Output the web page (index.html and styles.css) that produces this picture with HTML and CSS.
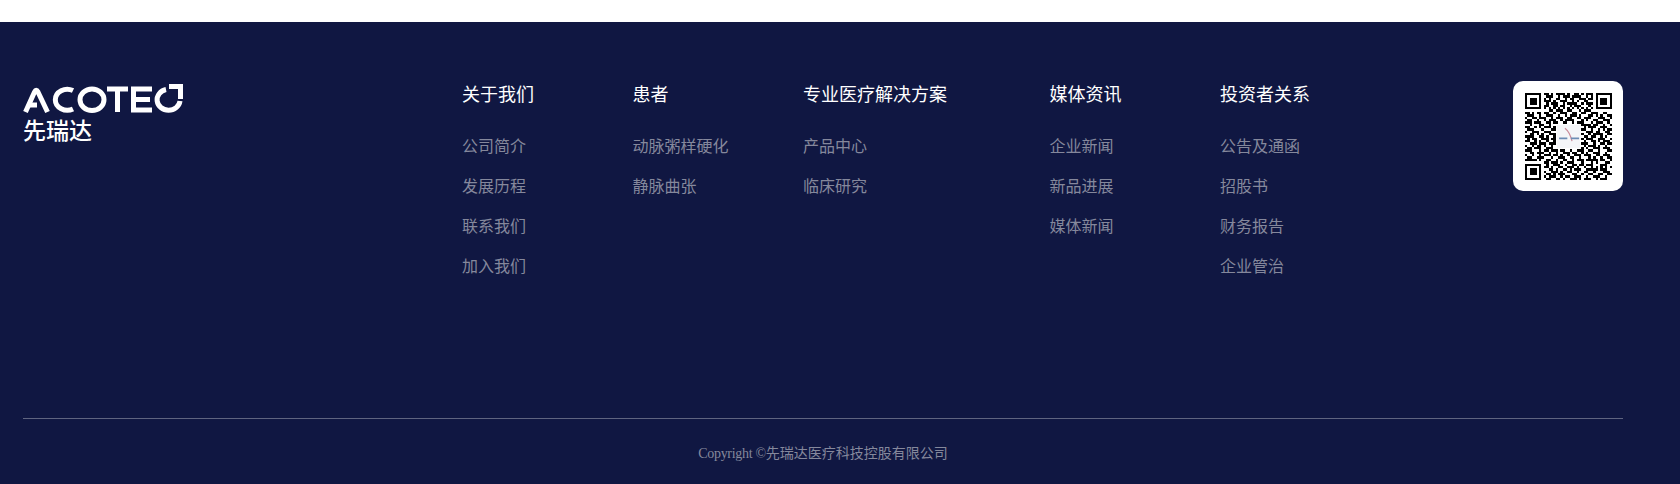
FILE: index.html
```html
<!DOCTYPE html>
<html lang="zh-CN">
<head>
<meta charset="utf-8">
<title>先瑞达</title>
<link rel="stylesheet" href="styles.css">
</head>
<body>
<footer class="footer">
  <div class="top">
    <div class="brand">
      <svg class="logo" viewBox="0 0 162 30" width="162" height="30" fill="none" stroke="#fff" stroke-width="5" aria-label="ACOTEC">
        <path d="M2.500 28 L11.500 8 Q13.200 4.500 15 8 L24.500 28"/>
        <path d="M7 21 H14"/>
        <path d="M50 6.500 A12 10.500 0 1 0 50 25"/>
        <ellipse cx="69" cy="15.800" rx="12" ry="10.800"/>
        <path d="M84 5 H105 M94.500 5 V28"/>
        <path d="M129 5 H110.500 V26 H129 M110.500 15.500 H127"/>
        <path d="M143 5.500 A11.500 10.500 0 1 0 157 17"/>
        <path d="M146 2.500 H157.500 V15"/>
      </svg>
      <div class="brand-cn">先瑞达</div>
    </div>
    <nav class="cols">
      <div class="col">
        <h4 class="col-title">关于我们</h4>
        <a class="col-link">公司简介</a>
        <a class="col-link">发展历程</a>
        <a class="col-link">联系我们</a>
        <a class="col-link">加入我们</a>
      </div>
      <div class="col">
        <h4 class="col-title">患者</h4>
        <a class="col-link">动脉粥样硬化</a>
        <a class="col-link">静脉曲张</a>
      </div>
      <div class="col col-wide">
        <h4 class="col-title">专业医疗解决方案</h4>
        <a class="col-link">产品中心</a>
        <a class="col-link">临床研究</a>
      </div>
      <div class="col">
        <h4 class="col-title">媒体资讯</h4>
        <a class="col-link">企业新闻</a>
        <a class="col-link">新品进展</a>
        <a class="col-link">媒体新闻</a>
      </div>
      <div class="col">
        <h4 class="col-title">投资者关系</h4>
        <a class="col-link">公告及通函</a>
        <a class="col-link">招股书</a>
        <a class="col-link">财务报告</a>
        <a class="col-link">企业管治</a>
      </div>
    </nav>
    <div class="qr-card">
      <svg class="qr" viewBox="0 0 37 37" width="87" height="87" fill="none" stroke="#000" stroke-width="1" shape-rendering="crispEdges">
        <path d="M.5.5h6v6h-6zM30.500.5h6v6h-6zM.5 30.500h6v6h-6z"/>
        <path d="M2 2.500h3M2 3.500h3M2 4.500h3M32 2.500h3M32 3.500h3M32 4.500h3M2 32.500h3M2 33.500h3M2 34.500h3"/>
        <path d="M8 .5h2M11 .5h1M13 .5h4M18 .5h1M21 .5h2M24 .5h1M26 .5h3
                 M9 1.500h3M14 1.500h1M16 1.500h3M20 1.500h4M26 1.500h1M28 1.500h1
                 M8 2.500h1M10 2.500h1M13 2.500h2M17 2.500h1M19 2.500h2M23 2.500h3M27 2.500h2
                 M8 3.500h3M12 3.500h1M15 3.500h3M20 3.500h1M22 3.500h1M25 3.500h2
                 M9 4.500h1M11 4.500h3M16 4.500h1M18 4.500h4M24 4.500h1M26 4.500h3
                 M8 5.500h2M12 5.500h2M15 5.500h2M19 5.500h1M21 5.500h3M27 5.500h1
                 M8 6.500h1M10 6.500h1M12 6.500h1M14 6.500h1M16 6.500h1M18 6.500h1M20 6.500h1M22 6.500h1M24 6.500h1M26 6.500h1M28 6.500h1
                 M10 7.500h2M13 7.500h3M18 7.500h2M23 7.500h1M25 7.500h3
                 M0 8.500h2M3 8.500h1M5 8.500h2M8 8.500h2M12 8.500h1M15 8.500h3M20 8.500h2M24 8.500h2M28 8.500h3M33 8.500h2
                 M1 9.500h3M6 9.500h1M9 9.500h3M14 9.500h1M17 9.500h1M19 9.500h3M23 9.500h1M27 9.500h2M30 9.500h1M32 9.500h1M35 9.500h2
                 M0 10.500h1M3 10.500h2M6 10.500h3M11 10.500h1M13 10.500h3M18 10.500h2M22 10.500h2M25 10.500h3M31 10.500h3M36 10.500h1
                 M1 11.500h2M5 11.500h1M8 11.500h1M10 11.500h3M15 11.500h1M17 11.500h4M24 11.500h1M26 11.500h1M29 11.500h2M33 11.500h3
                 M0 12.500h3M4 12.500h3M9 12.500h2M12 12.500h2M16 12.500h2M20 12.500h1M22 12.500h3M28 12.500h1M30 12.500h3M35 12.500h1
                 M2 13.500h1M6 13.500h2M10 13.500h1M24 13.500h4M29 13.500h2M33 13.500h1M36 13.500h1
                 M0 14.500h2M4 14.500h1M6 14.500h1M8 14.500h3M12 14.500h1M25 14.500h1M27 14.500h3M32 14.500h3
                 M1 15.500h3M7 15.500h1M11 15.500h2M24 15.500h2M28 15.500h1M31 15.500h1M33 15.500h1M35 15.500h2
                 M0 16.500h1M3 16.500h3M8 16.500h3M26 16.500h3M30 16.500h2M34 16.500h2
                 M2 17.500h2M5 17.500h1M7 17.500h1M10 17.500h3M24 17.500h1M27 17.500h1M29 17.500h4M35 17.500h2
                 M0 18.500h4M6 18.500h2M9 18.500h1M12 18.500h1M25 18.500h2M28 18.500h2M32 18.500h1M34 18.500h1
                 M1 19.500h1M3 19.500h2M7 19.500h3M11 19.500h2M24 19.500h1M26 19.500h3M31 19.500h3M36 19.500h1
                 M0 20.500h2M4 20.500h1M6 20.500h1M9 20.500h1M12 20.500h1M25 20.500h1M28 20.500h2M31 20.500h1M33 20.500h3
                 M2 21.500h3M6 21.500h3M10 21.500h3M24 21.500h3M29 21.500h1M32 21.500h2M35 21.500h2
                 M0 22.500h1M3 22.500h1M5 22.500h2M8 22.500h1M11 22.500h1M25 22.500h1M27 22.500h3M31 22.500h1M34 22.500h1
                 M1 23.500h2M4 23.500h3M9 23.500h3M24 23.500h1M26 23.500h1M29 23.500h3M33 23.500h3
                 M0 24.500h3M6 24.500h1M8 24.500h2M11 24.500h3M15 24.500h2M19 24.500h1M22 24.500h3M27 24.500h2M31 24.500h1M35 24.500h2
                 M2 25.500h2M5 25.500h3M10 25.500h1M13 25.500h1M16 25.500h3M20 25.500h2M24 25.500h1M26 25.500h1M29 25.500h3M34 25.500h1
                 M0 26.500h1M3 26.500h1M6 26.500h1M8 26.500h3M12 26.500h2M15 26.500h1M18 26.500h1M21 26.500h3M25 26.500h3M30 26.500h2M33 26.500h3
                 M1 27.500h2M5 27.500h3M11 27.500h1M14 27.500h3M19 27.500h2M23 27.500h1M27 27.500h1M29 27.500h1M32 27.500h1M35 27.500h2
                 M0 28.500h5M6 28.500h1M9 28.500h2M13 28.500h1M16 28.500h2M20 28.500h1M22 28.500h3M26 28.500h5M32 28.500h2M36 28.500h1
                 M8 29.500h2M11 29.500h3M15 29.500h1M18 29.500h3M24 29.500h1M28 29.500h1M30 29.500h1M34 29.500h2
                 M9 30.500h1M12 30.500h3M17 30.500h1M20 30.500h2M23 30.500h2M26 30.500h3M32 30.500h3
                 M8 31.500h2M11 31.500h1M14 31.500h2M18 31.500h3M22 31.500h1M25 31.500h1M28 31.500h1M30 31.500h1M32 31.500h1M34 31.500h1M36 31.500h1
                 M10 32.500h2M13 32.500h1M16 32.500h2M19 32.500h1M21 32.500h3M26 32.500h5M32 32.500h3
                 M8 33.500h1M11 33.500h3M15 33.500h1M18 33.500h2M22 33.500h1M25 33.500h2M29 33.500h1M33 33.500h3
                 M9 34.500h2M12 34.500h1M14 34.500h3M20 34.500h2M24 34.500h1M27 34.500h2M31 34.500h2M35 34.500h2
                 M8 35.500h1M10 35.500h3M15 35.500h1M17 35.500h2M21 35.500h3M26 35.500h1M29 35.500h3M34 35.500h1
                 M9 36.500h2M13 36.500h2M16 36.500h1M19 36.500h3M23 36.500h1M25 36.500h3M30 36.500h1M32 36.500h3"/>
        <rect x="13.500" y="13.500" width="10" height="10" fill="#f4f5f8" stroke="none"/>
        <path d="M17 15 Q19 16.500 20 20.500" stroke="#c98a9a" stroke-width=".5" shape-rendering="auto"/>
        <path d="M14.500 19.300h3.500M19.500 19.300h3.500" stroke="#6d8db5" stroke-width=".8" shape-rendering="auto"/>
      </svg>
    </div>
  </div>
  <div class="bottom">
    <p class="copyright"><span class="copyright-latin">Copyright ©</span>先瑞达医疗科技控股有限公司</p>
  </div>
</footer>
</body>
</html>
```
FILE: styles.css
```css
* {
  box-sizing: border-box;
}

html,
body {
  margin: 0;
  padding: 0;
  background: #fff;
}

body {
  padding-top: 22px;
  font-family: "Noto Sans CJK SC", sans-serif;
}

.footer {
  height: 462px;
  padding: 59px 57px 0 23px;
  background: #101742;
}

.top {
  display: flex;
  align-items: flex-start;
  height: 337px;
}

.brand {
  display: flex;
  flex-direction: column;
  width: 439px;
  flex: none;
}

.logo {
  display: block;
  margin-top: 3px;
}

.brand-cn {
  margin-top: 1px;
  font-size: 23px;
  line-height: 29px;
  font-weight: 500;
  color: #fff;
}

.cols {
  display: flex;
  flex: 1;
}

.col {
  display: flex;
  flex-direction: column;
  align-items: flex-start;
  width: 170.500px;
  flex: none;
}

.col-wide {
  width: 246.500px;
}

.col-title {
  margin: -1px 0 19px;
  font-size: 18px;
  line-height: 26px;
  font-weight: 400;
  color: #fff;
}

.col-link {
  font-size: 16px;
  line-height: 40px;
  color: #85889c;
}

.qr-card {
  display: flex;
  align-items: center;
  justify-content: center;
  width: 110px;
  height: 110px;
  flex: none;
  border-radius: 10px;
  background: #fff;
}

.qr {
  display: block;
  filter: blur(0.5px);
}

.bottom {
  border-top: 1px solid #5f6480;
}

.copyright {
  margin: 24px 0 0;
  text-align: center;
  font-family: "Liberation Serif", "Noto Sans CJK SC", serif;
  font-size: 14px;
  line-height: 22px;
  color: #85889c;
}

.copyright-latin {
  letter-spacing: -0.3px;
}
```
